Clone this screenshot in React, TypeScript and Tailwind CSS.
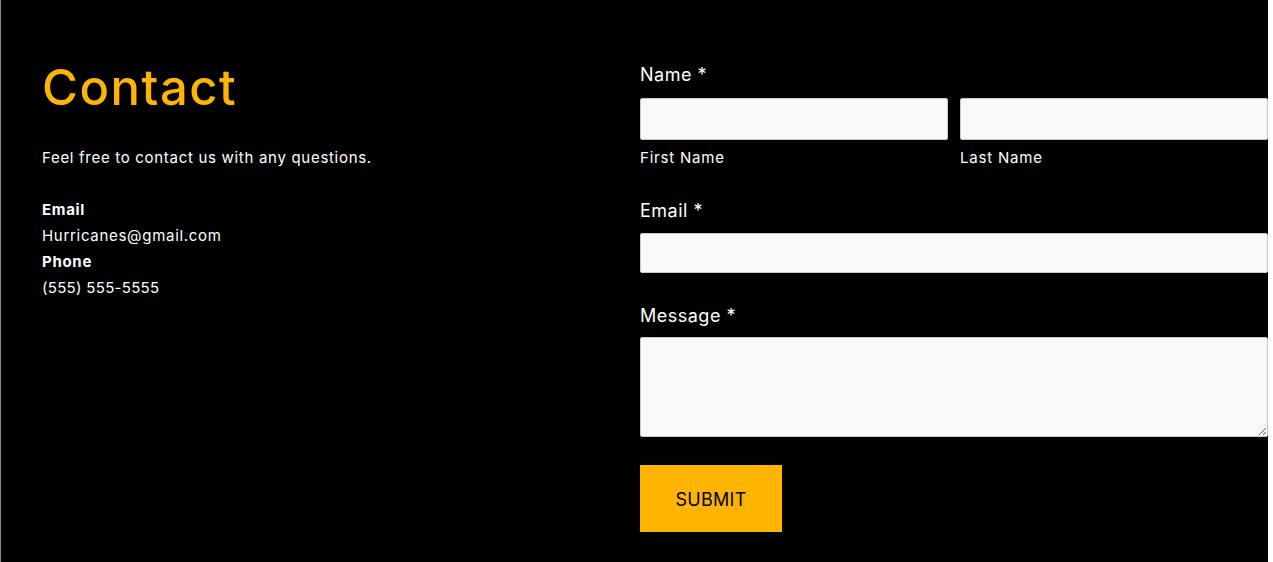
import React from "react"

const font = { fontFamily: "Inter, 'Noto Sans', sans-serif" }

export default function App() {
  return (
    <div className="flex h-[562px] w-full bg-white" style={font}>
      <div className="flex h-full w-[1268px] border-l border-[#8a8a8a] bg-black">
        {/* left column */}
        <div className="w-[639px] pl-[41px] pt-[58px] text-white">
          <h1 className="text-[49px] font-medium leading-[60px] tracking-[1.5px] text-[#ffb400]">Contact</h1>
          <p className="mt-[29px] text-[15px] leading-[22px] tracking-[0.7px]">Feel free to contact us with any questions.</p>
          <div className="mt-[28px] text-[15px] leading-[26px] tracking-[0.7px]">
            <div className="font-bold">Email</div>
            <div>Hurricanes@gmail.com</div>
            <div className="font-bold">Phone</div>
            <div className="tracking-[0.3px]">(555) 555-5555</div>
          </div>
        </div>

        {/* form */}
        <form className="w-[628px] pt-[63px] text-white">
          <label className="block text-[18px] leading-[24px] tracking-[0.5px]">Name *</label>
          <div className="mt-[11px] grid grid-cols-2 gap-[12px]">
            <div>
              <input className="block h-[42px] w-full rounded-[2px] border border-[#c8c8c8] bg-[#f9f9f9]" />
              <div className="mt-[8px] text-[15px] leading-[20px] tracking-[0.8px]">First Name</div>
            </div>
            <div>
              <input className="block h-[42px] w-full rounded-[2px] border border-[#c8c8c8] bg-[#f9f9f9]" />
              <div className="mt-[8px] text-[15px] leading-[20px] tracking-[0.8px]">Last Name</div>
            </div>
          </div>

          <label className="mt-[31px] block text-[18px] leading-[24px] tracking-[0.5px]">Email *</label>
          <input className="mt-[10px] block h-[40px] w-full rounded-[2px] border border-[#c8c8c8] bg-[#f9f9f9]" />

          <label className="mt-[31px] block text-[18px] leading-[24px] tracking-[0.5px]">Message *</label>
          <textarea className="mt-[9px] block h-[100px] w-full rounded-[2px] border border-[#c8c8c8] bg-[#f9f9f9]" />

          <button
            type="button"
            className="mt-[28px] flex h-[67px] w-[142px] items-center justify-center pt-[2px] bg-[#ffb400] text-[18px] tracking-[0.3px] text-black"
          >
            SUBMIT
          </button>
        </form>
      </div>
    </div>
  )
}
